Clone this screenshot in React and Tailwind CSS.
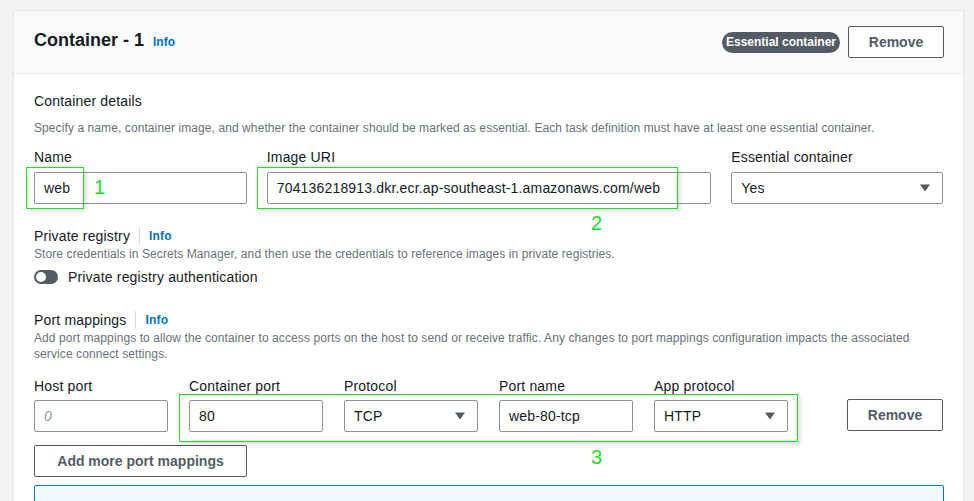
import React from "react";

const font = { fontFamily: '"Liberation Sans", Arial, sans-serif' };

function Caret() {
  return (
    <svg width="12" height="10" viewBox="0 0 12 10" className="shrink-0">
      <path d="M1 1.5h10L6 8.5z" fill="#545b64" />
    </svg>
  );
}

function Input({ value, placeholder, className = "" }) {
  return (
    <div
      className={`h-[32px] rounded-[2px] border border-[#879596] bg-white px-[9px] flex items-center text-[14px] tracking-[0.17px] text-[#16191f] ${className}`}
    >
      {value ? (
        <span>{value}</span>
      ) : (
        <span className="italic text-[#879596]">{placeholder}</span>
      )}
    </div>
  );
}

function Select({ value, className = "" }) {
  return (
    <div
      className={`h-[32px] rounded-[2px] border border-[#879596] bg-white pl-[9px] pr-[11px] flex items-center justify-between text-[14px] tracking-[0.17px] text-[#16191f] ${className}`}
    >
      <span>{value}</span>
      <Caret />
    </div>
  );
}

function Label({ children, className = "mb-[5px]" }) {
  return <div className={`text-[14px] leading-[20px] tracking-[0.17px] text-[#16191f] ${className}`}>{children}</div>;
}

function InfoLink({ sep }) {
  return (
    <span className="flex items-center">
      {sep && <span className="mx-[9px] h-[18px] w-px bg-[#d5dbdb]" />}
      <span className="text-[12px] font-bold text-[#0073bb]">Info</span>
    </span>
  );
}

export default function App() {
  return (
    <div className="min-h-[501px] w-[974px] overflow-hidden bg-[#f2f3f3] pt-[10px] pl-[13px]" style={font}>
      <div className="relative w-[951px] h-[520px] bg-white border border-[#e4e7e7] shadow-[0_1px_1px_rgba(0,0,0,0.08)]">
        {/* header */}
        <div className="h-[63px] bg-[#fafafa] border-b border-[#eaeded] flex items-center pl-[20px] pr-[19px]">
          <div className="flex items-baseline gap-[9px] pb-[3px]">
            <span className="text-[18px] font-bold text-[#16191f]">Container - 1</span>
            <span className="text-[12px] font-bold text-[#0073bb]">Info</span>
          </div>
          <div className="ml-auto flex items-center gap-[8px]">
            <span className="h-[21px] px-[4px] rounded-full bg-[#545b64] text-white text-[12px] font-bold flex items-center">
              Essential container
            </span>
            <button className="w-[96px] h-[32px] border border-[#545b64] rounded-[2px] bg-white text-[14px] font-bold text-[#545b64]">
              Remove
            </button>
          </div>
        </div>

        {/* body */}
        <div className="pl-[20px] pr-[20px] pt-[17px]">
          <div className="text-[14px] leading-[20px] tracking-[0.17px] text-[#16191f]">Container details</div>
          <div className="mt-[9px] text-[12px] leading-[16px] tracking-[0.09px] text-[#687078]">
            Specify a name, container image, and whether the container should be marked as essential. Each task definition must have at least one essential container.
          </div>

          <div className="mt-[11px] flex">
            <div className="w-[213px]">
              <Label>Name</Label>
              <Input value="web" />
            </div>
            <div className="w-[445px] ml-[20px]">
              <Label>Image URI</Label>
              <Input value="704136218913.dkr.ecr.ap-southeast-1.amazonaws.com/web" />
            </div>
            <div className="w-[212px] ml-[20px]">
              <Label>Essential container</Label>
              <Select value="Yes" />
            </div>
          </div>

          <div className="mt-[22px] flex items-center text-[14px] leading-[20px] tracking-[0.17px] text-[#16191f]">
            Private registry
            <InfoLink sep />
          </div>
          <div className="text-[12px] leading-[16px] tracking-[0.09px] text-[#687078]">
            Store credentials in Secrets Manager, and then use the credentials to reference images in private registries.
          </div>
          <div className="mt-[5px] flex items-center gap-[10px] h-[20px]">
            <span className="relative w-[24px] h-[14px] rounded-full bg-[#545b64]">
              <span className="absolute left-[2px] top-[2px] w-[10px] h-[10px] rounded-full bg-white" />
            </span>
            <span className="text-[14px] tracking-[0.17px] text-[#16191f]">Private registry authentication</span>
          </div>

          <div className="mt-[23px] flex items-center text-[14px] leading-[20px] tracking-[0.17px] text-[#16191f]">
            Port mappings
            <InfoLink sep />
          </div>
          <div className="text-[12px] leading-[16px] tracking-[0.09px] text-[#687078] w-[900px]">
            Add port mappings to allow the container to access ports on the host to send or receive traffic. Any changes to port mappings configuration impacts the associated service connect settings.
          </div>

          <div className="mt-[14px] flex items-end">
            <div className="flex gap-[21px]">
              <div className="w-[134px]">
                <Label className="mb-[4px]">Host port</Label>
                <Input placeholder="0" />
              </div>
              <div className="w-[134px]">
                <Label className="mb-[4px]">Container port</Label>
                <Input value="80" />
              </div>
              <div className="w-[134px]">
                <Label className="mb-[4px]">Protocol</Label>
                <Select value="TCP" />
              </div>
              <div className="w-[134px]">
                <Label className="mb-[4px]">Port name</Label>
                <Input value="web-80-tcp" />
              </div>
              <div className="w-[134px]">
                <Label className="mb-[4px]">App protocol</Label>
                <Select value="HTTP" />
              </div>
            </div>
            <button className="ml-auto mb-[1px] w-[96px] h-[32px] border border-[#545b64] rounded-[2px] bg-white text-[14px] font-bold text-[#545b64]">
              Remove
            </button>
          </div>

          <button className="mt-[13px] w-[213px] h-[32px] border border-[#545b64] rounded-[2px] bg-white text-[14px] font-bold text-[#545b64]">
            Add more port mappings
          </button>

          <div className="mt-[8px] h-[60px] w-[910px] border border-[#0073bb] rounded-[2px] bg-[#f1faff]" />
        </div>

        {/* annotations */}
        <div className="absolute left-[12px] top-[156px] w-[58px] h-[42px] border border-[#22dd22] shadow-[2px_2px_4px_rgba(0,0,0,0.15)]" />
        <div className="absolute left-[80px] top-[164px] text-[20px] leading-[24px] text-[#22dd22]" style={{ fontFamily: '"Liberation Sans", sans-serif' }}>1</div>
        <div className="absolute left-[243px] top-[156px] w-[421px] h-[42px] border border-[#22dd22] shadow-[2px_2px_4px_rgba(0,0,0,0.15)]" />
        <div className="absolute left-[577px] top-[200px] text-[20px] leading-[24px] text-[#22dd22]" style={{ fontFamily: '"Liberation Sans", sans-serif' }}>2</div>
        <div className="absolute left-[165px] top-[383px] w-[619px] h-[48px] border border-[#22dd22] shadow-[2px_2px_4px_rgba(0,0,0,0.15)]" />
        <div className="absolute left-[577px] top-[434px] text-[20px] leading-[24px] text-[#22dd22]" style={{ fontFamily: '"Liberation Sans", sans-serif' }}>3</div>
      </div>
    </div>
  );
}
